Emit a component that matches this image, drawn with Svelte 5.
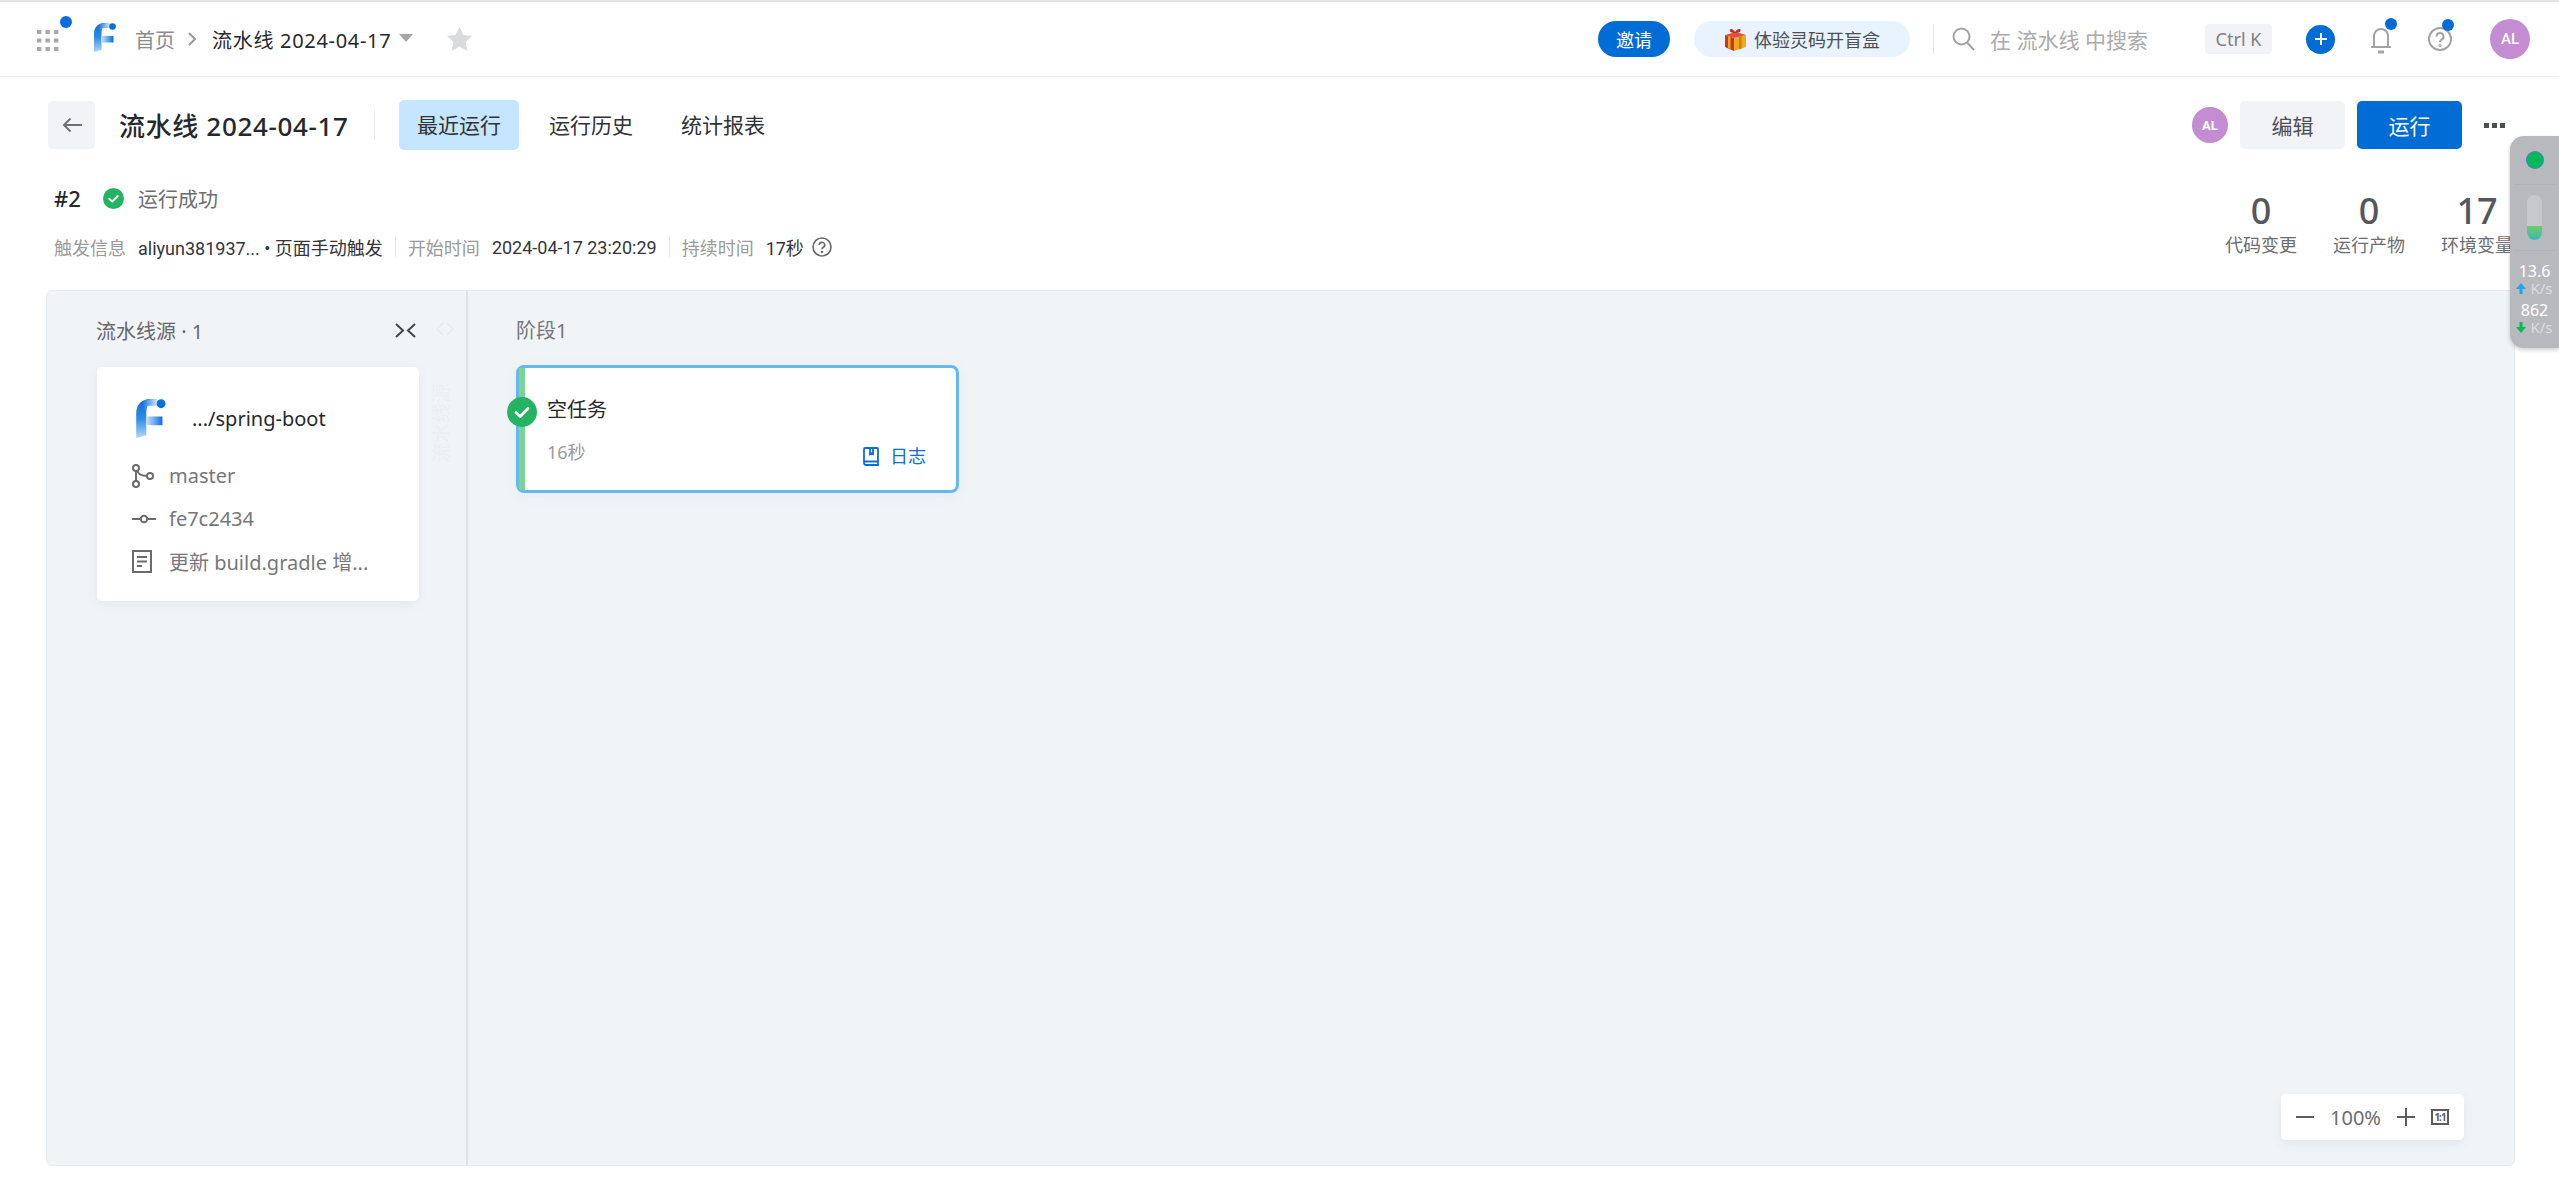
<script>
  const infoLines = [
    { icon: "branch", text: "master" },
    { icon: "commit", text: "fe7c2434" },
    { icon: "doc", text: "更新 build.gradle 增..." }
  ];
  const stats = [
    { value: "0", label: "代码变更" },
    { value: "0", label: "运行产物" },
    { value: "17", label: "环境变量" }
  ];
  const tabs = ["最近运行", "运行历史", "统计报表"];
</script>

{#snippet logo(w, h, id)}
  <svg width={w} height={h} viewBox="0 0 22 29">
    <defs>
      <linearGradient id={id + "a"} x1="0" y1="0" x2="0" y2="1">
        <stop offset="0" stop-color="#0a6fdc" />
        <stop offset="0.5" stop-color="#2f8be6" />
        <stop offset="1" stop-color="#b5d8f7" />
      </linearGradient>
      <linearGradient id={id + "b"} x1="0" y1="0" x2="1" y2="0">
        <stop offset="0" stop-color="#cfe4f9" />
        <stop offset="1" stop-color="#0a6fdc" />
      </linearGradient>
      <linearGradient id={id + "c"} x1="0" y1="0" x2="1" y2="0">
        <stop offset="0" stop-color="#0a6fdc" />
        <stop offset="1" stop-color="#d5e8fa" />
      </linearGradient>
    </defs>
    <path d="M0 29V11C0 4 4 0 11 0H15V0.5C10 1 8 4 7.5 9V27Z" fill="url(#{id}a)" />
    <path d="M6 1C8 0 11 0 16 0V5H9C8 5 7.5 6 7.5 8L4 8Z" fill="url(#{id}c)" />
    <rect x="7.5" y="13" width="12" height="6.5" fill="url(#{id}b)" />
    <circle cx="18.5" cy="3.5" r="3.3" fill="#0a6fdc" />
  </svg>
{/snippet}

{#snippet check(size)}
  <svg width={size} height={size} viewBox="0 0 30 30">
    <circle cx="15" cy="15" r="15" fill="#24b263" />
    <path d="M9 15.5l4.2 4L21 11.5" fill="none" stroke="#fff" stroke-width="2.8" stroke-linecap="round" stroke-linejoin="round" />
  </svg>
{/snippet}

<div class="page">
  <header class="topbar">
    <div class="apps">
      <svg width="22" height="21" viewBox="0 0 22 21" fill="#a8a8a8">
        {#each [0, 8.5, 17] as y}
          {#each [0, 8.5, 17] as x}
            <rect x={x} y={y} width="4.4" height="4" />
          {/each}
        {/each}
      </svg>
      <span class="apps-dot"></span>
    </div>
    <span class="top-logo">{@render logo(22, 29, "t")}</span>
    <span class="crumb">首页</span>
    <svg class="crumb-sep" width="8" height="14" viewBox="0 0 8 14"><path d="M1 1l6 6-6 6" fill="none" stroke="#999" stroke-width="2" /></svg>
    <span class="crumb-cur">流水线 2024-04-17</span>
    <svg class="caret" width="14" height="8" viewBox="0 0 14 8"><path d="M0 0h14L7 8z" fill="#a6a6a6" /></svg>
    <svg class="star" width="25" height="24" viewBox="0 0 25 24"><path d="M12.5 0l3.9 8 8.6 1.1-6.3 6 1.6 8.9-7.8-4.3L4.7 24l1.6-8.9L0 9.1 8.6 8z" fill="#dadbdd" /></svg>

    <div class="top-right">
      <button class="invite">邀请</button>
      <button class="gift">
        <svg width="23" height="23" viewBox="0 0 23 23">
          <path d="M1 7l9 3v13l-9-4z" fill="#c8352a" />
          <path d="M10 10l12-3v12l-12 4z" fill="#f0a81e" />
          <path d="M1 7l11-3 10 3-12 3z" fill="#e0503a" />
          <path d="M4 8.200l2.500.8v12l-2.500-1.100z" fill="#f0a81e" />
          <path d="M15 8.700l2.500-.6v12.500l-2.500.8z" fill="#c97f14" />
          <path d="M11 5C8 5 5 4 6 1.500 7.500 0 10 2 11 4c1-2 4-4 5.500-2.500C17.500 4 14 5 11 5z" fill="#c22c28" />
        </svg>
        <span>体验灵码开盲盒</span>
      </button>
      <span class="top-divider"></span>
      <svg class="search-icon" width="23" height="24" viewBox="0 0 23 24"><circle cx="9.5" cy="9.5" r="8" fill="none" stroke="#a3a3a3" stroke-width="2" /><path d="M15 15.5l7 7.5" stroke="#a3a3a3" stroke-width="2" /></svg>
      <span class="search-text">在 流水线 中搜索</span>
      <span class="kbd">Ctrl K</span>
      <span class="plus">
        <svg width="14" height="14" viewBox="0 0 14 14"><path d="M7 1v12M1 7h12" stroke="#fff" stroke-width="2" /></svg>
      </span>
      <span class="bell">
        <svg width="22" height="30" viewBox="0 0 22 30" fill="none" stroke="#a3a3a3" stroke-width="2"><path d="M4 22V12a7 7 0 0 1 14 0v10M1 23h20" /><path d="M8 28h6" stroke-width="3" /></svg>
        <span class="dot"></span>
      </span>
      <span class="help">
        <svg width="24" height="24" viewBox="0 0 24 24" fill="none" stroke="#a3a3a3" stroke-width="2"><circle cx="12" cy="12" r="11" /><path d="M8.5 9.5a3.5 3.5 0 1 1 5 3.2c-1 .6-1.5 1.2-1.5 2.3" /><circle cx="12" cy="18.5" r="0.6" /></svg>
        <span class="dot"></span>
      </span>
      <span class="avatar big">AL</span>
    </div>
  </header>

  <section class="title-row">
    <button class="back">
      <svg width="20" height="16" viewBox="0 0 20 16" fill="none" stroke="#6e7075" stroke-width="2"><path d="M20 8H2M8.5 1.5L2 8l6.5 6.5" /></svg>
    </button>
    <h1>流水线 2024-04-17</h1>
    <span class="title-divider"></span>
    <nav class="tabs">
      {#each tabs as tab, i}
        <span class="tab" class:active={i === 0}>{tab}</span>
      {/each}
    </nav>
    <div class="actions">
      <span class="avatar small">AL</span>
      <button class="btn">编辑</button>
      <button class="btn primary">运行</button>
      <span class="more"><i></i><i></i><i></i></span>
    </div>
  </section>

  <section class="summary">
    <div class="run">
      <div class="run-status">
        <span class="run-no">#2</span>
        {@render check(21)}
        <span class="run-text">运行成功</span>
      </div>
      <div class="meta">
        <span class="meta-key">触发信息</span>
        <span class="meta-val">aliyun381937... • 页面手动触发</span>
        <span class="meta-div"></span>
        <span class="meta-key">开始时间</span>
        <span class="meta-val">2024-04-17 23:20:29</span>
        <span class="meta-div"></span>
        <span class="meta-key">持续时间</span>
        <span class="meta-val">17秒</span>
        <svg class="meta-help" width="20" height="20" viewBox="0 0 20 20" fill="none" stroke="#666" stroke-width="1.6"><circle cx="10" cy="10" r="9" /><path d="M7.3 8a2.7 2.7 0 1 1 3.8 2.5c-.8.4-1.1.9-1.1 1.7" /><circle cx="10" cy="15" r="0.5" /></svg>
      </div>
    </div>
    <div class="stats">
      {#each stats as s}
        <div class="stat">
          <b>{s.value}</b>
          <span>{s.label}</span>
        </div>
      {/each}
    </div>
  </section>

  <main class="canvas">
    <aside class="sources">
      <div class="sources-head">
        <span>流水线源 · 1</span>
        <svg width="21" height="15" viewBox="0 0 21 15" fill="none" stroke="#444" stroke-width="2"><path d="M1 1l7 6.5L1 14M20 1l-7 6.5 7 6.5" /></svg>
      </div>
      <div class="source-card">
        <div class="repo">
          <span class="repo-logo">{@render logo(30, 39, "r")}</span>
          <span>.../spring-boot</span>
        </div>
        {#each infoLines as line}
          <div class="info-line">
            <span class="info-icon">
              {#if line.icon === "branch"}
                <svg width="22" height="24" viewBox="0 0 22 24" fill="none" stroke="#6b6b6b" stroke-width="2"><circle cx="4" cy="4" r="3" /><circle cx="4" cy="20" r="3" /><circle cx="18" cy="12" r="3" /><path d="M4 7v10M5.5 7c1 3 4 5 9.500 5" /></svg>
              {:else if line.icon === "commit"}
                <svg width="24" height="10" viewBox="0 0 24 10" fill="none" stroke="#6b6b6b" stroke-width="2"><circle cx="12" cy="5" r="3.2" /><path d="M0 5h8.500M15.500 5H24" /></svg>
              {:else}
                <svg width="20" height="23" viewBox="0 0 20 23" fill="none" stroke="#6b6b6b" stroke-width="2"><rect x="1" y="1" width="18" height="21" /><path d="M5 7h10M5 11.500h10M5 16h5" /></svg>
              {/if}
            </span>
            <span>{line.text}</span>
          </div>
        {/each}
      </div>
      <svg class="ghost-toggle" width="18" height="14" viewBox="0 0 18 14" fill="none" stroke="#e8ebef" stroke-width="2"><path d="M7 1L1 7l6 6M11 1l6 6-6 6" /></svg>
      <span class="ghost-label">流水线源</span>
    </aside>

    <div class="stage">
      <div class="stage-title">阶段1</div>
      <div class="job">
        <span class="job-check">{@render check(30)}</span>
        <div class="job-name">空任务</div>
        <div class="job-foot">
          <span class="job-time">16秒</span>
          <span class="job-log">
            <svg width="16" height="19" viewBox="0 0 16 19" fill="none" stroke="#0b6fd6" stroke-width="1.8"><path d="M1 15V2a1 1 0 0 1 1-1h12a1 1 0 0 1 1 1v16H3a2 2 0 0 1-2-2v-1zM1 14.500h14M7 1v6l1.500-1L10 7V1" /></svg>
            日志
          </span>
        </div>
      </div>
    </div>

    <div class="zoom">
      <svg width="18" height="2" viewBox="0 0 18 2"><path d="M0 1h18" stroke="#5c5c5c" stroke-width="2" /></svg>
      <span>100%</span>
      <svg width="18" height="18" viewBox="0 0 18 18"><path d="M0 9h18M9 0v18" stroke="#5c5c5c" stroke-width="2" /></svg>
      <span class="one">1:1</span>
    </div>
  </main>

  <aside class="monitor">
    <span class="led"></span>
    <hr />
    <span class="meter"><i></i></span>
    <hr />
    <div class="speed">13.6</div>
    <div class="unit"><svg width="10" height="11" viewBox="0 0 10 11"><path d="M5 0l5 6H6.500v5h-3V6H0z" fill="#1aa6f5" /></svg>K/s</div>
    <div class="speed second">862</div>
    <div class="unit"><svg width="10" height="11" viewBox="0 0 10 11"><path d="M5 11L0 5h3.500V0h3v5H10z" fill="#05b85c" /></svg>K/s</div>
  </aside>
</div>

<style>
  :global(body) {
    margin: 0;
    background: #fff;
  }

  .page {
    position: relative;
    height: 1188px;
    overflow: hidden;
    font-family: "Noto Sans", "Noto Sans CJK SC", sans-serif;
    color: #26282c;
  }

  button {
    font-family: inherit;
    border: none;
    cursor: pointer;
  }

  /* top bar */
  .topbar {
    box-sizing: border-box;
    height: 77px;
    border-top: 2px solid #e3e3e3;
    border-bottom: 1px solid #eeeeee;
    display: flex;
    align-items: center;
    padding-left: 37px;
  }
  .apps {
    position: relative;
    display: flex;
    margin-top: 2px;
  }
  .apps-dot {
    position: absolute;
    left: 23px;
    top: -14px;
    width: 12px;
    height: 12px;
    border-radius: 50%;
    background: #0a6fdc;
  }
  .top-logo {
    display: flex;
    margin-left: 35px;
    margin-top: -3px;
  }
  .crumb {
    margin-left: 19px;
    font-size: 20px;
    color: #8c8c8c;
  }
  .crumb-sep {
    margin-left: 13px;
  }
  .crumb-cur {
    margin-left: 16px;
    width: 179px;
    font-size: 20px;
    letter-spacing: 0.7px;
    color: #26282c;
    white-space: nowrap;
  }
  .caret {
    margin-left: 8px;
    margin-top: -2px;
  }
  .star {
    margin-left: 34px;
  }
  .top-right {
    margin-left: auto;
    display: flex;
    align-items: center;
    padding-right: 29px;
  }
  .invite {
    width: 72px;
    height: 36px;
    border-radius: 18px;
    background: #006cd6;
    color: #fff;
    font-size: 18px;
    padding: 0;
  }
  .gift {
    margin-left: 24px;
    width: 216px;
    height: 36px;
    border-radius: 18px;
    background: #e8f3fe;
    color: #4d4f53;
    font-size: 18px;
    padding: 0;
    display: flex;
    align-items: center;
    justify-content: center;
    gap: 7px;
  }
  .top-divider {
    margin-left: 23px;
    width: 1px;
    height: 30px;
    background: #e6e6e6;
  }
  .search-icon {
    margin-left: 18px;
  }
  .search-text {
    margin-left: 15px;
    width: 215px;
    font-size: 21px;
    color: #aaaaaa;
    white-space: pre;
  }
  .kbd {
    width: 67px;
    height: 30px;
    line-height: 30px;
    text-align: center;
    border-radius: 4px;
    background: #f1f3f6;
    font-size: 18px;
    color: #808080;
  }
  .plus {
    margin-left: 34px;
    width: 29px;
    height: 29px;
    border-radius: 50%;
    background: #006cd6;
    display: flex;
    align-items: center;
    justify-content: center;
  }
  .bell {
    position: relative;
    display: flex;
    margin-left: 35px;
  }
  .help {
    position: relative;
    display: flex;
    margin-left: 36px;
  }
  .dot {
    position: absolute;
    width: 12px;
    height: 12px;
    border-radius: 50%;
    background: #006cd6;
    right: -5px;
    top: -6px;
  }
  .help .dot {
    right: -2px;
    top: -8px;
  }
  .avatar {
    border-radius: 50%;
    background: #c48dd1;
    color: #fff;
    display: flex;
    align-items: center;
    justify-content: center;
    font-family: Roboto, sans-serif;
    font-weight: 500;
  }
  .avatar.big {
    margin-left: 38px;
    width: 40px;
    height: 40px;
    font-size: 15px;
  }
  .avatar.small {
    width: 36px;
    height: 36px;
    font-size: 13px;
    font-weight: 700;
  }

  /* title row */
  .title-row {
    margin-top: 24px;
    height: 48px;
    padding: 0 54px 0 48px;
    display: flex;
    align-items: center;
  }
  .back {
    width: 47px;
    height: 48px;
    border-radius: 5px;
    background: #f1f3f6;
    padding: 0;
    display: flex;
    align-items: center;
    justify-content: center;
  }
  h1 {
    margin: 0 0 0 24px;
    width: 230px;
    font-size: 26px;
    font-weight: 500;
    letter-spacing: 0.65px;
    white-space: nowrap;
    color: #26282c;
  }
  .title-divider {
    margin-left: 25px;
    width: 1px;
    height: 30px;
    background: #e8e8e8;
  }
  .tabs {
    margin-left: 24px;
    display: flex;
    align-items: center;
    gap: 12px;
  }
  .tab {
    width: 120px;
    height: 50px;
    line-height: 50px;
    text-align: center;
    font-size: 21px;
    border-radius: 5px;
    color: #303236;
  }
  .tab.active {
    background: #c6e6ff;
  }
  .actions {
    margin-left: auto;
    display: flex;
    align-items: center;
  }
  .btn {
    margin-left: 12px;
    width: 105px;
    height: 48px;
    border-radius: 5px;
    background: #f1f3f6;
    color: #4d4f53;
    font-size: 21px;
    padding: 0;
  }
  .btn.primary {
    background: #006cd6;
    color: #fff;
  }
  .more {
    margin-left: 22px;
    display: flex;
    gap: 3px;
  }
  .more i {
    width: 5px;
    height: 5px;
    background: #4d4f53;
    display: block;
  }

  /* run summary */
  .summary {
    height: 106px;
    margin-top: 35px;
    padding: 0 28px 0 54px;
    display: flex;
    justify-content: space-between;
  }
  .run-status {
    display: flex;
    align-items: center;
    height: 28px;
  }
  .run-no {
    width: 49px;
    font-size: 22px;
    font-weight: 500;
    color: #26282c;
  }
  .run-text {
    margin-left: 14px;
    font-size: 20px;
    color: #6b6d71;
  }
  .meta {
    margin-top: 21px;
    display: flex;
    align-items: center;
    height: 28px;
    font-family: Roboto, "Noto Sans CJK SC", sans-serif;
    font-size: 18px;
    white-space: nowrap;
  }
  .meta-key {
    color: #9a9a9a;
  }
  .meta-val {
    margin-left: 12px;
    color: #33353a;
  }
  .meta-div {
    margin: 0 12px;
    width: 1px;
    height: 20px;
    background: #e8e8e8;
  }
  .meta-help {
    margin-left: 8px;
  }
  .stats {
    display: flex;
  }
  .stat {
    width: 108px;
    display: flex;
    flex-direction: column;
    align-items: center;
    white-space: nowrap;
  }
  .stat b {
    font-size: 36px;
    line-height: 42px;
    margin-top: 6px;
    font-weight: 500;
    color: #55575b;
  }
  .stat span {
    font-size: 18px;
    line-height: 26px;
    color: #6b6d71;
  }

  /* canvas */
  .canvas {
    position: relative;
    box-sizing: border-box;
    margin-left: 46px;
    width: 2469px;
    height: 876px;
    background: #f1f4f7;
    border: 1px solid #e6ebf0;
    border-radius: 6px;
    display: flex;
  }
  .sources {
    position: relative;
    box-sizing: border-box;
    width: 421px;
    border-right: 2px solid #dfe3e7;
    padding: 0 48px 0 50px;
  }
  .sources-head {
    height: 76px;
    margin-left: -1px;
    padding-top: 2px;
    box-sizing: border-box;
    display: flex;
    align-items: center;
    justify-content: space-between;
    font-size: 20px;
    color: #65676b;
    padding-right: 2px;
  }
  .source-card {
    width: 322px;
    height: 234px;
    box-sizing: border-box;
    background: #fff;
    border-radius: 5px;
    box-shadow: 0 3px 12px rgba(30, 50, 80, 0.07);
    padding: 31px 0 0 35px;
  }
  .repo {
    display: flex;
    align-items: center;
    height: 40px;
    font-size: 20px;
    color: #26282c;
    margin-bottom: 16px;
  }
  .repo-logo {
    display: flex;
    margin-left: 4px;
    margin-right: 26px;
  }
  .info-line {
    display: flex;
    align-items: center;
    height: 43px;
    font-size: 20px;
    color: #75777b;
    white-space: nowrap;
  }
  .info-icon {
    width: 37px;
    display: flex;
  }
  .ghost-toggle {
    position: absolute;
    right: 12px;
    top: 31px;
  }
  .ghost-label {
    position: absolute;
    right: 11px;
    top: 92px;
    writing-mode: vertical-rl;
    text-orientation: sideways;
    transform: rotate(180deg);
    font-size: 20px;
    color: #ebeef2;
  }
  .stage {
    padding-left: 48px;
  }
  .stage-title {
    height: 74px;
    line-height: 79px;
    font-size: 20px;
    color: #75777b;
  }
  .job {
    position: relative;
    box-sizing: border-box;
    width: 443px;
    height: 128px;
    background: #fff;
    border: 3px solid #66b8f0;
    border-left-width: 9px;
    border-radius: 8px;
    padding: 28px 30px 0 22px;
    box-shadow: 0 3px 14px rgba(30, 50, 80, 0.05);
  }
  .job::before {
    content: "";
    position: absolute;
    left: -6px;
    top: 0;
    bottom: 0;
    width: 6px;
    background: #7bd58f;
  }
  .job-check {
    position: absolute;
    left: -18px;
    top: 29px;
    display: flex;
    z-index: 1;
  }
  .job-name {
    font-size: 20px;
    line-height: 28px;
    color: #26282c;
  }
  .job-foot {
    margin-top: 15px;
    display: flex;
    justify-content: space-between;
    align-items: flex-end;
  }
  .job-time {
    font-size: 18px;
    line-height: 26px;
    color: #9a9a9a;
  }
  .job-log {
    display: flex;
    align-items: center;
    gap: 11px;
    font-size: 18px;
    line-height: 24px;
    color: #0b6fd6;
    margin-bottom: -3px;
    white-space: nowrap;
  }
  .zoom {
    position: absolute;
    right: 50px;
    bottom: 25px;
    box-sizing: border-box;
    width: 183px;
    height: 46px;
    background: #fff;
    border-radius: 5px;
    box-shadow: 0 4px 12px rgba(30, 50, 80, 0.07);
    padding: 0 15px;
    display: flex;
    align-items: center;
    justify-content: space-between;
    font-size: 20px;
    color: #6b6d71;
  }
  .one {
    box-sizing: border-box;
    width: 18px;
    height: 16px;
    border: 2px solid #5c5c5c;
    font-size: 10px;
    line-height: 12px;
    font-weight: 700;
    letter-spacing: -1px;
    text-align: center;
    color: #5c5c5c;
  }

  /* floating network monitor */
  .monitor {
    position: absolute;
    right: 0;
    top: 136px;
    box-sizing: border-box;
    width: 49px;
    height: 212px;
    background: #b8b9bd;
    border-radius: 14px 0 0 14px;
    box-shadow: 0 2px 4px rgba(0, 0, 0, 0.2);
    display: flex;
    flex-direction: column;
    align-items: center;
    color: #fff;
  }
  .led {
    margin-top: 16px;
    width: 16px;
    height: 16px;
    border-radius: 50%;
    background: #05b85c;
    box-shadow: 0 0 0 1px #4a7fc0;
  }
  .monitor hr {
    width: 42px;
    margin: 16px 0 0;
    border: none;
    border-top: 1px solid #a9b5b8;
  }
  .meter {
    position: relative;
    margin-top: 10px;
    width: 15px;
    height: 45px;
    border-radius: 8px;
    background: #c7c8cc;
    overflow: hidden;
  }
  .meter + hr {
    margin-top: 10px;
  }
  .meter i {
    position: absolute;
    left: 0;
    right: 0;
    bottom: 0;
    height: 14px;
    background: linear-gradient(#6fcb6a, #3ab8b8);
  }
  .speed {
    margin-top: 11px;
    font-size: 16px;
    line-height: 18px;
  }
  .speed.second {
    margin-top: 5px;
  }
  .unit {
    display: flex;
    align-items: center;
    gap: 4px;
    font-size: 15px;
    line-height: 16px;
    color: #dcdde0;
  }
</style>
